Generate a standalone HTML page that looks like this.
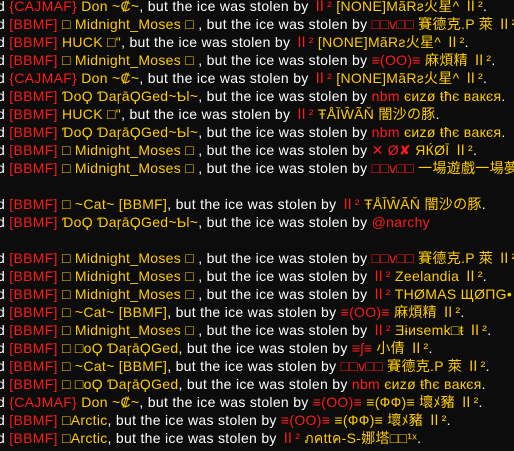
<!DOCTYPE html>
<html><head><meta charset="utf-8"><style>
html,body{margin:0;padding:0;background:#0c0c0c;width:514px;height:451px;overflow:hidden}
body{font-family:"Liberation Sans","Noto Sans CJK SC",sans-serif;font-size:14px;color:#fff;letter-spacing:0.3px}
.l{height:18px;line-height:18px;white-space:nowrap}
.r{color:#ff1a1a}.y{color:#ffcc00}
#w{position:relative;top:-3px;left:-3px}
</style></head><body><div id="w">
<div class="l">d <span class="r">{CAJMAF}</span> <span class="y">Don ~₡~</span>, but the ice was stolen by <span class="r">Ⅱ²</span> <span class="y">[NONE]ΜãRƨ火星^ Ⅱ²</span>.</div>
<div class="l">d <span class="r">[BBMF]</span> <span class="y">□ Midnight_Moses □ </span> , but the ice was stolen by <span class="r">□□v□□</span> <span class="y">賽德克.P 萊 Ⅱ²</span>.</div>
<div class="l">d <span class="r">[BBMF]</span> <span class="y">HUCK □"</span>, but the ice was stolen by <span class="r">Ⅱ²</span> <span class="y">[NONE]ΜãRƨ火星^ Ⅱ²</span>.</div>
<div class="l">d <span class="r">[BBMF]</span> <span class="y">□ Midnight_Moses □ </span> , but the ice was stolen by <span class="r">≡(OO)≡</span> <span class="y">麻煩精 Ⅱ²</span>.</div>
<div class="l">d <span class="r">{CAJMAF}</span> <span class="y">Don ~₡~</span>, but the ice was stolen by <span class="r">Ⅱ²</span> <span class="y">[NONE]ΜãRƨ火星^ Ⅱ²</span>.</div>
<div class="l">d <span class="r">[BBMF]</span> <span class="y">ƊoϘ ƊaŗāϘGed~Ƅl~</span>, but the ice was stolen by <span class="r">nbm</span> <span class="y">єиzø ŧħє вaкєя</span>.</div>
<div class="l">d <span class="r">[BBMF]</span> <span class="y">HUCK □"</span>, but the ice was stolen by <span class="r">Ⅱ²</span> <span class="y">ŦÅĬŴÃŇ 闇沙の豚</span>.</div>
<div class="l">d <span class="r">[BBMF]</span> <span class="y">ƊoϘ ƊaŗāϘGed~Ƅl~</span>, but the ice was stolen by <span class="r">nbm</span> <span class="y">єиzø ŧħє вaкєя</span>.</div>
<div class="l">d <span class="r">[BBMF]</span> <span class="y">□ Midnight_Moses □ </span> , but the ice was stolen by <span class="r">✕ Ø✘</span> <span class="y">ЯЌØĪ Ⅱ²</span>.</div>
<div class="l">d <span class="r">[BBMF]</span> <span class="y">□ Midnight_Moses □ </span> , but the ice was stolen by <span class="r">□□v□□</span> <span class="y">一場遊戲一場夢</span></div>
<div class="l"></div>
<div class="l">d <span class="r">[BBMF]</span> <span class="y">□ ~Cat~ [BBMF]</span>, but the ice was stolen by <span class="r">Ⅱ²</span> <span class="y">ŦÅĬŴÃŇ 闇沙の豚</span>.</div>
<div class="l">d <span class="r">[BBMF]</span> <span class="y">ƊoϘ ƊaŗāϘGed~Ƅl~</span>, but the ice was stolen by <span class="r">@narchy</span></div>
<div class="l"></div>
<div class="l">d <span class="r">[BBMF]</span> <span class="y">□ Midnight_Moses □ </span> , but the ice was stolen by <span class="r">□□v□□</span> <span class="y">賽德克.P 萊 Ⅱ²</span>.</div>
<div class="l">d <span class="r">[BBMF]</span> <span class="y">□ Midnight_Moses □ </span> , but the ice was stolen by <span class="r">Ⅱ²</span> <span class="y">Zeelandia Ⅱ²</span>.</div>
<div class="l">d <span class="r">[BBMF]</span> <span class="y">□ Midnight_Moses □ </span> , but the ice was stolen by <span class="r">Ⅱ²</span> <span class="y">THØMAS ЩØΠG•Ⅱ²</span>.</div>
<div class="l">d <span class="r">[BBMF]</span> <span class="y">□ ~Cat~ [BBMF]</span>, but the ice was stolen by <span class="r">≡(OO)≡</span> <span class="y">麻煩精 Ⅱ²</span>.</div>
<div class="l">d <span class="r">[BBMF]</span> <span class="y">□ Midnight_Moses □ </span> , but the ice was stolen by <span class="r">Ⅱ²</span> <span class="y">Ǝɨиsemk□ŧ Ⅱ²</span>.</div>
<div class="l">d <span class="r">[BBMF]</span> <span class="y">□ □oϘ ƊaŗāϘGed</span>, but the ice was stolen by <span class="r">≡ʃ≡</span> <span class="y">小倩 Ⅱ²</span>.</div>
<div class="l">d <span class="r">[BBMF]</span> <span class="y">□ ~Cat~ [BBMF]</span>, but the ice was stolen by <span class="r">□□v□□</span> <span class="y">賽德克.P 萊 Ⅱ²</span>.</div>
<div class="l">d <span class="r">[BBMF]</span> <span class="y">□ □oϘ ƊaŗāϘGed</span>, but the ice was stolen by <span class="r">nbm</span> <span class="y">єиzø ŧħє вaкєя</span>.</div>
<div class="l">d <span class="r">{CAJMAF}</span> <span class="y">Don ~₡~</span>, but the ice was stolen by <span class="r">≡(OO)≡</span> <span class="y">≡(ФФ)≡ 壞ﾒ豬 Ⅱ²</span>.</div>
<div class="l">d <span class="r">[BBMF]</span> <span class="y">□Arctic</span>, but the ice was stolen by <span class="r">≡(OO)≡</span> <span class="y">≡(ФФ)≡ 壞ﾒ豬 Ⅱ²</span>.</div>
<div class="l">d <span class="r">[BBMF]</span> <span class="y">□Arctic</span>, but the ice was stolen by <span class="r">Ⅱ²</span> <span class="y">ภคttค-S-娜塔□□¹ˣ</span>.</div>
</div></body></html>
